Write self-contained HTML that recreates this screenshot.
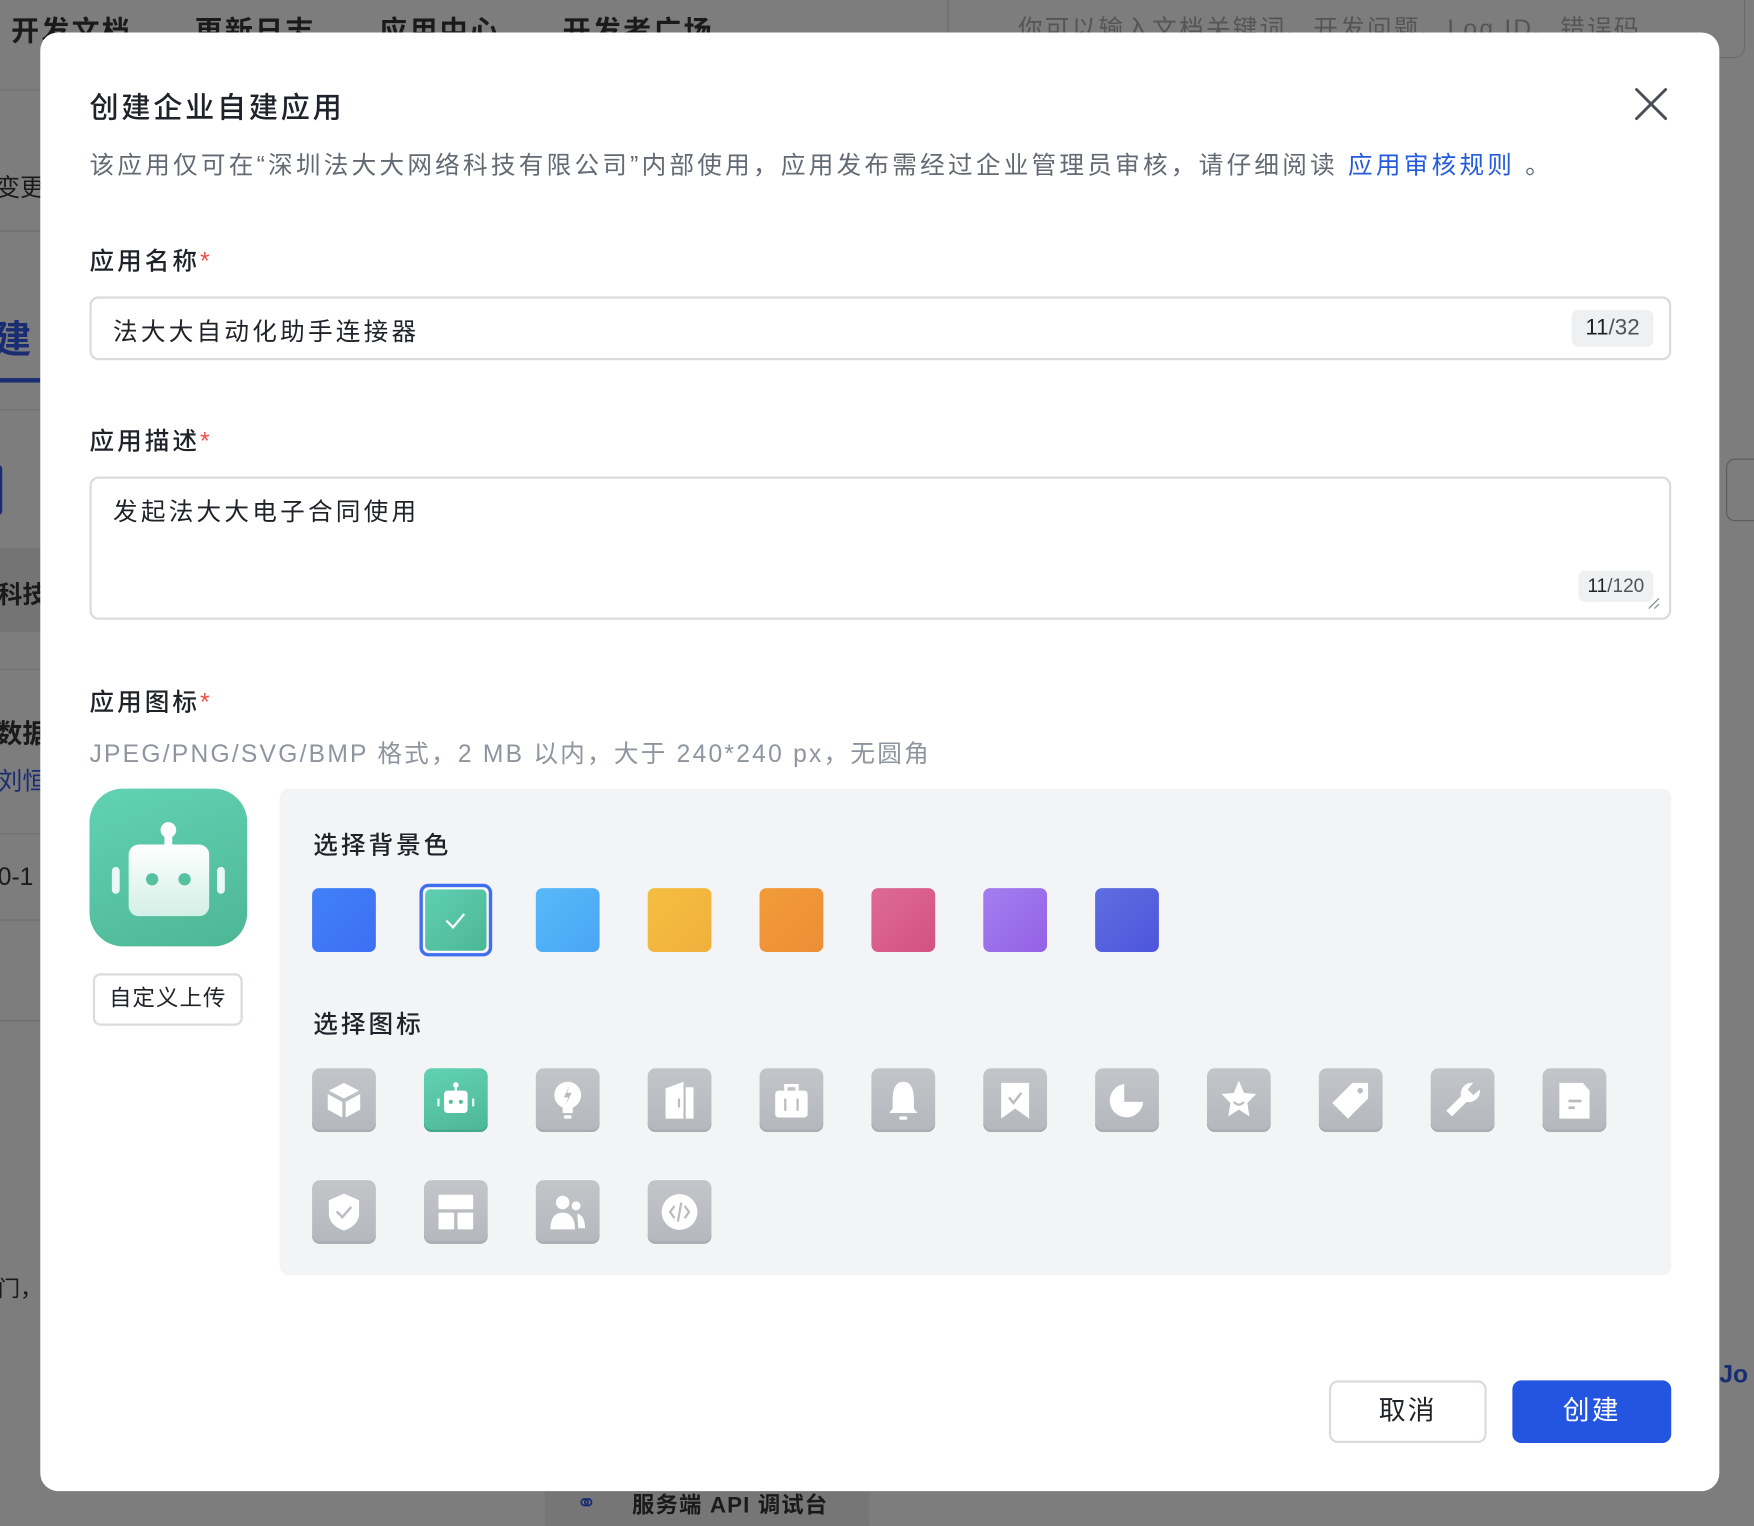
<!DOCTYPE html>
<html><head><meta charset="utf-8"><style>
*{margin:0;padding:0;box-sizing:border-box}
html,body{width:1754px;height:1526px;overflow:hidden;background:#7c7c7c}
body{font-family:"Liberation Sans","Noto Sans CJK SC",sans-serif}
#w{position:absolute;left:0;top:0;width:1568px;height:1364px;transform:scale(1.118622);transform-origin:0 0;background:#7d7d7d}
.a{position:absolute;white-space:nowrap}
.bg{color:#1a1a1a;font-size:24px;font-weight:bold}
.hl{position:absolute;left:0;width:36px;height:1px;background:#6e6e6e}
.modal{position:absolute;left:36px;top:29px;width:1501px;height:1304px;background:#fff;border-radius:16px}
.lbl{font-size:22px;color:#1f2329;font-weight:500;letter-spacing:2.7px}
.lbl i{color:#f54a45;font-style:normal}
.sw{position:absolute;top:794px;width:57px;height:57px;border-radius:6px}
.ic{position:absolute;width:57px;height:57px;border-radius:7px;background:linear-gradient(180deg,#c3c5c9,#b4b7bc);box-shadow:inset 0 -2px 0 #a9acb1}
.ic svg{position:absolute;left:0;top:0}
</style></head><body><div id="w">
<div class="a bg" style="left:10px;top:8px;font-size:25px;letter-spacing:2px">开发文档</div>
<div class="a bg" style="left:174px;top:8px;font-size:25px;letter-spacing:2px">更新日志</div>
<div class="a bg" style="left:339px;top:8px;font-size:25px;letter-spacing:2px">应用中心</div>
<div class="a bg" style="left:503px;top:8px;font-size:25px;letter-spacing:2px">开发者广场</div>
<div class="a" style="left:847px;top:-10px;width:713px;height:62px;border:1px solid #6a6a6a;border-radius:10px"></div>
<div class="a" style="left:910px;top:8px;font-size:22px;color:#555;letter-spacing:2px">你可以输入文档关键词、开发问题、Log ID、错误码</div>
<div class="hl" style="top:80px"></div><div class="hl" style="top:206px"></div><div class="hl" style="top:366px"></div><div class="hl" style="top:598px"></div><div class="hl" style="top:745px"></div><div class="hl" style="top:822px"></div><div class="hl" style="top:912px"></div>
<div class="a" style="left:0;top:490px;width:36px;height:75px;background:#747474"></div>
<div class="a bg" style="left:-4px;top:150px;font-weight:normal;font-size:22px">变更</div>
<div class="a" style="left:-6px;top:276px;font-size:34px;font-weight:bold;color:#1b2d72">建</div>
<div class="a" style="left:0;top:338px;width:36px;height:4px;background:#1b2d72"></div>
<div class="a" style="left:-6px;top:416px;width:8px;height:44px;background:#1b2d72;border-radius:3px"></div>
<div class="a bg" style="left:-2px;top:514px;font-size:22px">科技</div>
<div class="a bg" style="left:-4px;top:636px;font-size:24px">数据</div>
<div class="a" style="left:-2px;top:681px;font-size:22px;color:#1b2d72">刘恒</div>
<div class="a bg" style="left:-2px;top:771px;font-size:22px;font-weight:normal">0-1</div>
<div class="a bg" style="left:-2px;top:1136px;font-size:20px;font-weight:normal">门，</div>
<div class="a" style="left:1543px;top:410px;width:40px;height:56px;border:1px solid #5a5a5a;border-radius:8px"></div>
<div class="a" style="left:1537px;top:1216px;font-size:22px;color:#1b2d72;font-weight:bold">Jo</div>
<div class="a" style="left:487px;top:1333px;width:290px;height:31px;background:#767676"></div>
<div class="a" style="left:565px;top:1329px;font-size:20px;color:#1a1a1a;font-weight:bold;letter-spacing:1px">服务端 API 调试台</div>
<div class="a" style="left:515px;top:1331px;font-size:22px;color:#1b2d72">⚭</div>

<div class="modal"></div>
<div class="a" style="left:80px;top:76px;font-size:26px;color:#1f2329;font-weight:500;letter-spacing:2.5px">创建企业自建应用</div>
<svg class="a" style="left:1461px;top:78px" width="30" height="30" viewBox="0 0 30 30"><path d="M2 2L28 28M28 2L2 28" stroke="#4a4f57" stroke-width="2.6" stroke-linecap="round"/></svg>
<div class="a" style="left:80px;top:130px;font-size:22px;color:#646a73;letter-spacing:2.9px">该应用仅可在“深圳法大大网络科技有限公司”内部使用，应用发布需经过企业管理员审核，请仔细阅读 <span style="color:#245bdb">应用审核规则</span> 。</div>

<div class="a lbl" style="left:80px;top:216px">应用名称<i>*</i></div>
<div class="a" style="left:80px;top:265px;width:1414px;height:57px;border:2px solid #d9dbde;border-radius:8px"></div>
<div class="a" style="left:101px;top:279px;font-size:22px;color:#1f2329;letter-spacing:2.9px">法大大自动化助手连接器</div>
<div class="a" style="left:1405px;top:277px;width:73px;height:33px;background:#eff0f1;border-radius:6px;font-size:20px;color:#4e5358;text-align:center;line-height:33px"><span style="color:#1f2329">11</span>/32</div>

<div class="a lbl" style="left:80px;top:377px">应用描述<i>*</i></div>
<div class="a" style="left:80px;top:426px;width:1414px;height:128px;border:2px solid #d9dbde;border-radius:8px"></div>
<div class="a" style="left:101px;top:440px;font-size:22px;color:#1f2329;letter-spacing:2.9px">发起法大大电子合同使用</div>
<div class="a" style="left:1411px;top:510px;width:67px;height:28px;background:#eff0f1;border-radius:6px;font-size:17px;color:#4e5358;text-align:center;line-height:28px"><span style="color:#1f2329">11</span>/120</div>
<svg class="a" style="left:1472px;top:533px" width="12" height="12"><path d="M2 11L11 2M7 11L11 7" stroke="#8f959e" stroke-width="1.2"/></svg>

<div class="a lbl" style="left:80px;top:610px">应用图标<i>*</i></div>
<div class="a" style="left:80px;top:656px;font-size:22px;color:#8f959e;letter-spacing:2px">JPEG/PNG/SVG/BMP 格式，2 MB 以内，大于 240*240 px，无圆角</div>

<div class="a" style="left:80px;top:705px;width:141px;height:141px;border-radius:30px;background:linear-gradient(160deg,#62d2b4,#4db794)">
<svg width="141" height="141" viewBox="0 0 141 141"><defs><linearGradient id="rg" x1="0" y1="0" x2="0" y2="1"><stop offset="0" stop-color="#fff"/><stop offset="1" stop-color="#d3efe6"/></linearGradient></defs>
<circle cx="70.5" cy="37" r="7" fill="#fff"/><rect x="67" y="40" width="7" height="12" fill="#fff"/>
<rect x="35" y="50" width="72" height="64" rx="9" fill="url(#rg)"/>
<rect x="20" y="70" width="7" height="24" rx="3.5" fill="#e9f8f3"/><rect x="114" y="70" width="7" height="24" rx="3.5" fill="#e9f8f3"/>
<circle cx="56" cy="81" r="5.5" fill="#56c19e"/><circle cx="85" cy="81" r="5.5" fill="#56c19e"/></svg></div>
<div class="a" style="left:83px;top:870px;width:134px;height:47px;border:2px solid #d9dbde;border-radius:7px;font-size:20px;color:#1f2329;text-align:center;line-height:43px;letter-spacing:1px">自定义上传</div>

<div class="a" style="left:250px;top:705px;width:1244px;height:435px;background:#f3f4f6;border-radius:8px"></div>
<div class="a lbl" style="left:280px;top:738px">选择背景色</div>
<div class="sw" style="left:279px;background:linear-gradient(135deg,#4180f7,#3d6ff3)"></div>
<div class="a" style="left:375px;top:790px;width:65px;height:65px;border:3px solid #3f6ef0;border-radius:8px"></div>
<div class="sw" style="left:379px;background:linear-gradient(135deg,#5fcfb3,#4db793);border:1px solid #fff"><svg width="55" height="55"><path d="M19 28L25 34L35 22" stroke="#fff" stroke-width="2" fill="none"/></svg></div>
<div class="sw" style="left:479px;background:linear-gradient(135deg,#58b9f9,#4aa5f4)"></div>
<div class="sw" style="left:579px;background:linear-gradient(135deg,#f5be40,#f0b03c)"></div>
<div class="sw" style="left:679px;background:linear-gradient(135deg,#f29b38,#ec8e37)"></div>
<div class="sw" style="left:779px;background:linear-gradient(135deg,#de6b93,#d2527f)"></div>
<div class="sw" style="left:879px;background:linear-gradient(135deg,#a37ff0,#9461e6)"></div>
<div class="sw" style="left:979px;background:linear-gradient(135deg,#5e6ee0,#4d55dc)"></div>

<div class="a lbl" style="left:280px;top:898px">选择图标</div>
<div class="ic" style="left:279px;top:955px"><svg width="57" height="57"><path d="M28.5 13L42 20L28.5 27L15 20Z M14 23L27 30V44L14 37Z M43 23L30 30V44L43 37Z" fill="#fff"/></svg></div>
<div class="ic" style="left:379px;top:955px;background:linear-gradient(160deg,#62d2b4,#4db794);box-shadow:inset 0 -2px 0 #45a887"><svg width="57" height="57"><circle cx="28.5" cy="15" r="2.5" fill="#fff"/><rect x="27.5" y="16" width="2" height="5" fill="#fff"/><rect x="18" y="20" width="21" height="20" rx="3" fill="#fff"/><rect x="12" y="27" width="2" height="7" fill="#e8f8f2"/><rect x="43" y="27" width="2" height="7" fill="#e8f8f2"/><circle cx="24" cy="30" r="1.8" fill="#54bf9c"/><circle cx="33" cy="30" r="1.8" fill="#54bf9c"/></svg></div>
<div class="ic" style="left:479px;top:955px"><svg width="57" height="57"><circle cx="28.5" cy="24" r="12" fill="#fff"/><rect x="24" y="34" width="9" height="6" fill="#fff"/><rect x="25" y="42" width="7" height="3" rx="1.5" fill="#fff"/><path d="M30 16L25 26H29L27 32L32 22H28Z" fill="#b9bcc1"/></svg></div>
<div class="ic" style="left:579px;top:955px"><svg width="57" height="57"><path d="M16 18L32 12V45H16Z M34 17H41V45H34Z" fill="#fff"/><rect x="27" y="27" width="2" height="8" fill="#b9bcc1"/></svg></div>
<div class="ic" style="left:679px;top:955px"><svg width="57" height="57"><path d="M22 14H35V20H32V17H25V20H22Z" fill="#fff"/><rect x="14" y="20" width="29" height="24" rx="3" fill="#fff"/><rect x="22" y="27" width="2" height="11" fill="#b9bcc1"/><rect x="33" y="27" width="2" height="11" fill="#b9bcc1"/></svg></div>
<div class="ic" style="left:779px;top:955px"><svg width="57" height="57"><path d="M28.5 12C21 12 19 20 19 28V36L16 40H41L38 36V28C38 20 36 12 28.5 12Z" fill="#fff"/><rect x="25" y="43" width="7" height="3" rx="1.5" fill="#fff"/></svg></div>
<div class="ic" style="left:879px;top:955px"><svg width="57" height="57"><path d="M16 13H41V45L28.5 36L16 45Z" fill="#fff"/><path d="M23 26L27 31L34 22" stroke="#b9bcc1" stroke-width="2.2" fill="none"/></svg></div>
<div class="ic" style="left:979px;top:955px"><svg width="57" height="57"><path d="M26 14A15 15 0 1 0 43 30H26Z" fill="#fff"/></svg></div>
<div class="ic" style="left:1079px;top:955px"><svg width="57" height="57"><path d="M28.5 11L33 22L44 23L36 31L38 43L28.5 37L19 43L21 31L13 23L24 22Z" fill="#fff"/><path d="M24 30Q28.5 35 33 30" stroke="#b9bcc1" stroke-width="2" fill="none"/></svg></div>
<div class="ic" style="left:1179px;top:955px"><svg width="57" height="57"><path d="M30 13H44V27L26 45L12 31Z" fill="#fff"/><circle cx="37" cy="20" r="2.5" fill="#b9bcc1"/></svg></div>
<div class="ic" style="left:1279px;top:955px"><svg width="57" height="57"><path d="M38 13A10 10 0 0 0 27 25L14 38L19 43L32 30A10 10 0 0 0 44 19L38 24L33 19Z" fill="#fff"/></svg></div>
<div class="ic" style="left:1379px;top:955px"><svg width="57" height="57"><path d="M15 13H36L42 20V45H15Z" fill="#fff"/><rect x="23" y="28" width="12" height="2.5" rx="1" fill="#b9bcc1"/><rect x="23" y="34" width="6" height="2.5" rx="1" fill="#b9bcc1"/></svg></div>
<div class="ic" style="left:279px;top:1055px"><svg width="57" height="57"><path d="M28.5 12L42 18V30C42 38 35 43 28.5 45C22 43 15 38 15 30V18Z" fill="#fff"/><path d="M22 28L27 33L35 24" stroke="#b9bcc1" stroke-width="2.2" fill="none"/></svg></div>
<div class="ic" style="left:379px;top:1055px"><svg width="57" height="57"><rect x="13" y="13" width="31" height="13" rx="1" fill="#fff"/><rect x="13" y="29" width="14" height="15" rx="1" fill="#fff"/><rect x="30" y="29" width="14" height="15" rx="1" fill="#fff"/></svg></div>
<div class="ic" style="left:479px;top:1055px"><svg width="57" height="57"><circle cx="24" cy="20" r="6" fill="#fff"/><path d="M13 44C13 34 17 29 24 29C31 29 35 34 35 44Z" fill="#fff"/><circle cx="36" cy="23" r="4" fill="#fff"/><path d="M37 30C42 31 44 36 44 43H38Z" fill="#fff"/></svg></div>
<div class="ic" style="left:579px;top:1055px"><svg width="57" height="57"><circle cx="28.5" cy="28.5" r="16" fill="#fff"/><path d="M24 23L20 28.5L24 34M33 23L37 28.5L33 34M30 20L27 37" stroke="#b9bcc1" stroke-width="2" fill="none"/></svg></div>

<div class="a" style="left:1188px;top:1234px;width:141px;height:56px;border:2px solid #d9dbde;border-radius:8px;font-size:24px;color:#1f2329;text-align:center;line-height:52px;letter-spacing:2px">取消</div>
<div class="a" style="left:1352px;top:1234px;width:142px;height:56px;background:#2455e0;border-radius:8px;font-size:24px;color:#fff;text-align:center;line-height:56px;letter-spacing:2px">创建</div>
</div></body></html>
